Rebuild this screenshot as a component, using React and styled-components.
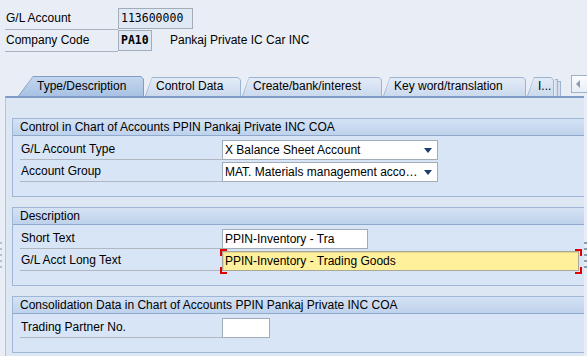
import React from "react";
import styled, {createGlobalStyle} from "styled-components";

const GlobalStyle = createGlobalStyle`
  html, body {
    margin: 0;
    padding: 0;
    background: #e9eef6;
  }
`;

// tabs of the G/L account screen
const tabs = [
  {label: "Type/Description", width: 126, active: true},
  {label: "Control Data", width: 96},
  {label: "Create/bank/interest", width: 140},
  {label: "Key word/translation", width: 143},
  {label: "I...", width: 27},
];

const App = () => {
  return (
    <>
      <GlobalStyle />
      <Page>
        <TopFields>
          <TopRow>
            <TopLabel>G/L Account</TopLabel>
            <ReadOnlyInput $w={75}>113600000</ReadOnlyInput>
          </TopRow>
          <TopRow>
            <TopLabel>Company Code</TopLabel>
            <ReadOnlyInput $w={34} $bold>PA10</ReadOnlyInput>
            <CompanyName>Pankaj Private IC Car INC</CompanyName>
          </TopRow>
        </TopFields>

        <TabStrip>
          {tabs.map((t) => (
            <Tab key={t.label} $w={t.width} $active={t.active} $slant={t.active ? 15 : 7}>
              <TabLabel>{t.label}</TabLabel>
            </Tab>
          ))}
          <StackEdge $h={17} />
          <StackEdge $h={15} />
          <ScrollButton>
            <LeftArrow />
          </ScrollButton>
        </TabStrip>

        <Panel>
          <Group>
            <GroupHeader>Control in Chart of Accounts PPIN Pankaj Private INC COA</GroupHeader>
            <GroupBody>
              <FieldRow>
                <FieldLabel>G/L Account Type</FieldLabel>
                <Dropdown>
                  <DropText>X Balance Sheet Account</DropText>
                  <DropArrow />
                </Dropdown>
              </FieldRow>
              <FieldRow>
                <FieldLabel>Account Group</FieldLabel>
                <Dropdown>
                  <DropText>MAT. Materials management acco…</DropText>
                  <DropArrow />
                </Dropdown>
              </FieldRow>
            </GroupBody>
          </Group>

          <Group>
            <GroupHeader>Description</GroupHeader>
            <GroupBody>
              <FieldRow>
                <FieldLabel>Short Text</FieldLabel>
                <TextInput $w={146}>PPIN-Inventory - Tra</TextInput>
              </FieldRow>
              <FieldRow>
                <FieldLabel>G/L Acct Long Text</FieldLabel>
                <TextInput $w={357} $focus>
                  PPIN-Inventory - Trading Goods
                  <Corner $pos="tl" />
                  <Corner $pos="tr" />
                  <Corner $pos="bl" />
                  <Corner $pos="br" />
                </TextInput>
              </FieldRow>
            </GroupBody>
          </Group>

          <Group>
            <GroupHeader>Consolidation Data in Chart of Accounts PPIN Pankaj Private INC COA</GroupHeader>
            <GroupBody>
              <FieldRow>
                <FieldLabel>Trading Partner No.</FieldLabel>
                <TextInput $w={48} />
              </FieldRow>
            </GroupBody>
          </Group>
        </Panel>

        <Grip $side="right" />
        <Grip $side="left" />
      </Page>
    </>
  );
};

const Page = styled.div`
  position: relative;
  width: 587px;
  height: 356px;
  overflow: hidden;
  display: flex;
  flex-direction: column;
  background: #e9eef6;
  font-family: "Liberation Sans", Arial, sans-serif;
  font-size: 12px;
  color: #000;
`;

const TopFields = styled.div`
  padding: 8px 0 0 5px;
  display: flex;
  flex-direction: column;
`;
const TopRow = styled.div`
  display: flex;
  align-items: flex-start;
  height: 22px;
`;
const TopLabel = styled.div`
  box-sizing: border-box;
  width: 113px;
  height: 22px;
  padding-left: 1px;
  line-height: 21px;
  border-bottom: 1px solid #a9b2bd;
`;
const ReadOnlyInput = styled.div`
  box-sizing: border-box;
  width: ${(p) => p.$w}px;
  height: 21px;
  padding-left: 2px;
  line-height: 19px;
  background: #dfe9f6;
  border: 1px solid #a3adba;
  font-family: "DejaVu Sans Mono", "Liberation Mono", monospace;
  font-size: 11.5px;
  font-weight: ${(p) => (p.$bold ? 700 : 400)};
`;
const CompanyName = styled.div`
  margin-left: 18px;
  line-height: 21px;
`;

const TabStrip = styled.div`
  margin-top: 23px;
  height: 21px;
  padding-left: 18px;
  display: flex;
  align-items: flex-end;
`;
const Tab = styled.div`
  position: relative;
  box-sizing: border-box;
  width: ${(p) => p.$w}px;
  height: ${(p) => (p.$active ? 20 : 19)}px;
  margin-right: 1px;
  padding-left: ${(p) => p.$slant + 4}px;
  line-height: ${(p) => (p.$active ? 20 : 19)}px;
  white-space: nowrap;
  background: ${(p) => (p.$active ? "#7f9dc8" : "#9db3d2")};
  clip-path: polygon(0 100%, ${(p) => p.$slant}px 0, calc(100% - 3px) 0, 100% 3px, 100% 100%);

  &::before {
    content: "";
    position: absolute;
    inset: 1px 1px 0 1px;
    background: ${(p) =>
      p.$active
        ? "linear-gradient(#c3d6ee, #a9c2e3)"
        : "linear-gradient(#e3ebf6, #cbdaee)"};
    clip-path: polygon(0 100%, ${(p) => p.$slant - 1}px 0, calc(100% - 2px) 0, 100% 2px, 100% 100%);
  }
`;
const TabLabel = styled.span`
  position: relative;
`;
const StackEdge = styled.div`
  box-sizing: border-box;
  width: 3px;
  height: ${(p) => p.$h}px;
  background: #d3dfef;
  border-top: 1px solid #9db3d2;
  border-right: 1px solid #9db3d2;
`;
const ScrollButton = styled.div`
  box-sizing: border-box;
  align-self: flex-start;
  margin-left: auto;
  width: 16px;
  height: 18px;
  display: flex;
  align-items: center;
  padding-left: 4px;
  background: linear-gradient(#fbfcfe, #e8eef6);
  border: 1px solid #9fb1c8;
  border-right: none;
`;
const LeftArrow = styled.div`
  width: 0;
  height: 0;
  border-top: 4px solid transparent;
  border-bottom: 4px solid transparent;
  border-right: 4px solid #8c9bb0;
`;

const Panel = styled.div`
  flex: 1;
  margin: 0 3px 0 5px;
  padding: 20px 0 0 6px;
  display: flex;
  flex-direction: column;
  gap: 10px;
  background: #dde7f4;
  border-top: 2px solid #7d9bc5;
  border-left: 1px solid #b1c4dc;
`;
const Group = styled.div`
  background: #d8e5f6;
  border: 1px solid #9fb6d4;
  border-right: none;
`;
const GroupHeader = styled.div`
  height: 16px;
  padding-left: 7px;
  line-height: 16px;
  white-space: nowrap;
  background: linear-gradient(#d4e2f4, #bfd2ec);
  border-bottom: 1px solid #8ea9cc;
`;
const GroupBody = styled.div`
  padding: 4px 0 14px 7px;
  display: flex;
  flex-direction: column;
  gap: 2px;
`;
const FieldRow = styled.div`
  display: flex;
  align-items: flex-start;
  height: 20px;
`;
const FieldLabel = styled.div`
  box-sizing: border-box;
  width: 202px;
  height: 20px;
  padding-left: 1px;
  line-height: 19px;
  border-bottom: 1px solid #b0b7c1;
`;
const Dropdown = styled.div`
  box-sizing: border-box;
  width: 216px;
  height: 20px;
  display: flex;
  align-items: center;
  padding: 0 5px 0 2px;
  background: #fff;
  border: 1px solid #a3abb6;
`;
const DropText = styled.span`
  flex: 1;
  white-space: nowrap;
  overflow: hidden;
`;
const DropArrow = styled.span`
  width: 0;
  height: 0;
  border-left: 4px solid transparent;
  border-right: 4px solid transparent;
  border-top: 5px solid #1e3c6c;
`;
const TextInput = styled.div`
  position: relative;
  box-sizing: border-box;
  width: ${(p) => p.$w}px;
  height: 20px;
  padding-left: 2px;
  line-height: 18px;
  white-space: nowrap;
  background: ${(p) => (p.$focus ? "#fff19c" : "#fff")};
  border: 1px solid ${(p) => (p.$focus ? "#a9a79a" : "#a3abb6")};
  box-shadow: ${(p) => (p.$focus ? "inset 1px 1px 0 #e6d88a" : "none")};
`;
// red focus brackets around the required field
const Corner = styled.span`
  position: absolute;
  width: 5px;
  height: 5px;
  border-color: #e00000;
  border-style: solid;
  border-width: 0;
  ${(p) => (p.$pos[0] === "t" ? "top: -3px;" : "bottom: -4px;")}
  ${(p) => (p.$pos[1] === "l" ? "left: -3px;" : "right: -4px;")}
  ${(p) => (p.$pos[0] === "t" ? "border-top-width: 2px;" : "border-bottom-width: 2px;")}
  ${(p) => (p.$pos[1] === "l" ? "border-left-width: 2px;" : "border-right-width: 2px;")}
`;

// splitter grips at the window edges
const Grip = styled.div`
  position: absolute;
  top: 242px;
  ${(p) => (p.$side === "right" ? "right: 0; width: 3px;" : "left: 0; width: 2px;")}
  height: 27px;
  background: repeating-linear-gradient(
    ${(p) => (p.$side === "right" ? "#8b9bb2" : "#b5c1ce")} 0 2px,
    transparent 2px 6px
  );
`;

export default App;
